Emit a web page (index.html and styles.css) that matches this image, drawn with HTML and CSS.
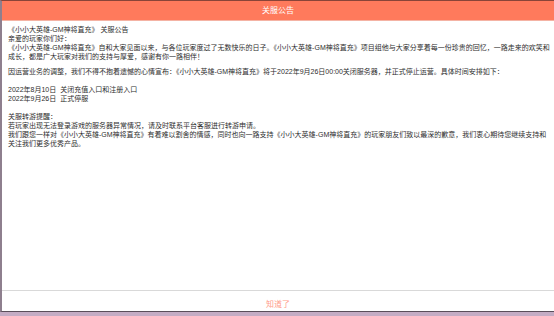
FILE: index.html
```html
<!DOCTYPE html>
<html>
<head>
    <meta charset="utf-8">
    <title>关服公告</title>
    <link rel="stylesheet" href="styles.css">
</head>
<body>
    <div class="dialog">
        <div class="dialog-title">关服公告</div>
        <div class="dialog-content">
            <p>《小小大英雄-GM神将直充》 关服公告<br>
            亲爱的玩家你们好：<br>
            《小小大英雄-GM神将直充》自和大家见面以来，与各位玩家度过了无数快乐的日子。《小小大英雄-GM神将直充》项目组他与大家分享着每一份珍贵的回忆，一路走来的欢笑和成长，都是广大玩家对我们的支持与厚爱，感谢有你一路相伴！</p>
            <p class="gap-s">因运营业务的调整，我们不得不抱着遗憾的心情宣布：《小小大英雄-GM神将直充》将于2022年9月26日00:00关闭服务器，并正式停止运营。具体时间安排如下：</p>
            <p>2022年8月10日&nbsp; 关闭充值入口和注册入口<br>
            2022年9月26日&nbsp; 正式停服</p>
            <p>关服转游提醒：<br>
            若玩家出现无法登录游戏的服务器异常情况，请及时联系平台客服进行转游申请。<br>
            我们跟您一样对《小小大英雄-GM神将直充》有着难以割舍的情感，同时也向一路支持《小小大英雄-GM神将直充》的玩家朋友们致以最深的歉意，我们衷心期待您继续支持和关注我们更多优秀产品。</p>
        </div>
        <div class="dialog-footer"><a href="#">知道了</a></div>
    </div>
    <div class="taskbar"></div>
</body>
</html>
```
FILE: styles.css
```css
*{
    padding: 0;
    margin: 0;
    text-decoration: none;
}

html, body
{
    height: 100%;
}

body
{
    display: flex;
    flex-direction: column;
    font-family: "Liberation Sans", "Noto Sans CJK SC", sans-serif;
    background-color: #ffffff;
    overflow: hidden;
}

.dialog
{
    flex: 1;
    display: flex;
    flex-direction: column;
    border-top: 1px solid #8a4438;
    border-left: 2px solid #8e7f8e;
    border-bottom: 1px solid #5a4e5a;
    background-color: #ffffff;
}

.dialog-title
{
    height: 19px;
    line-height: 19px;
    background-color: #ff7a5c;
    color: #ffffff;
    text-align: center;
    font-size: 8px;
    border-bottom: 1px solid #f4b3a4;
}

.dialog-content
{
    flex: 1;
    padding: 4px 4px 0 6px;
    color: #2e2e2e;
    font-size: 7px;
    line-height: 9px;
}

.dialog-content p
{
    margin-bottom: 9px;
}

.dialog-content p.gap-s
{
    margin-top: -3px;
}

.dialog-footer
{
    height: 20px;
    line-height: 21px;
    border-top: 1px solid #d9d9d9;
    text-align: center;
}

.dialog-footer a
{
    color: #ff9c8a;
    font-size: 8px;
}

.taskbar
{
    height: 4px;
    background-color: #c4acc4;
}
```
